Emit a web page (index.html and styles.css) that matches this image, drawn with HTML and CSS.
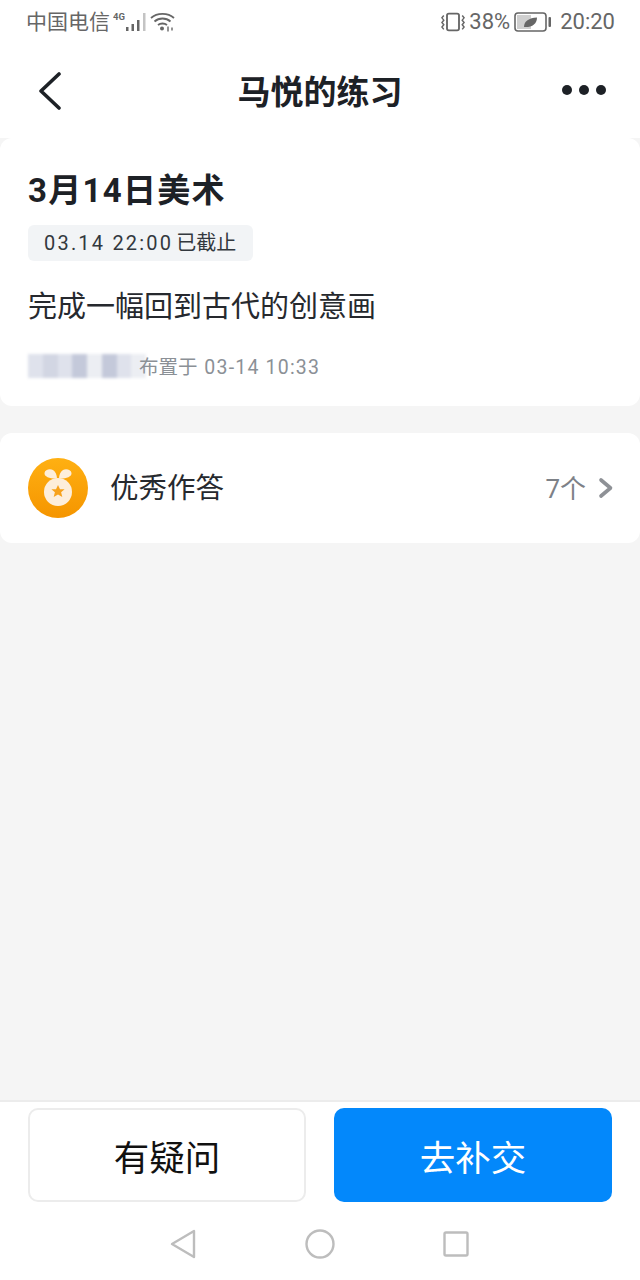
FILE: index.html

```html
<!DOCTYPE html>
<html lang="zh-CN">
 <head>
  <meta charset="UTF-8">
  <title>马悦的练习</title>
  <link rel="stylesheet" href="styles.css">
 </head>
 <body>
  <div class="page">
   <div class="status">
    <div class="status-left">
     <span class="carrier">中国电信</span>
     <svg class="signal" width="34" height="22" viewBox="0 0 34 22">
      <text x="0" y="9" class="net-type">4G</text>
      <rect x="13" y="16" width="2.500" height="4" fill="#666"/>
      <rect x="18.500" y="13" width="2.500" height="7" fill="#666"/>
      <rect x="24" y="9" width="2.500" height="11" fill="#666"/>
      <rect x="30" y="2" width="2.500" height="18" fill="#c4c4c4"/>
     </svg>
     <svg class="wifi" width="25" height="20" viewBox="0 0 25 20" fill="none" stroke="#666" stroke-width="1.800">
      <path d="M1 6C7 .5 18 .5 24 6"/>
      <path d="M4.500 9.500C9 5.500 16 5.500 20.500 9.500"/>
      <path d="M8 13C10.500 11 14.500 11 17 13"/>
      <circle cx="12" cy="16.500" r="2" fill="#666" stroke="none"/>
      <path d="M18 14.500v5M22 15.500v3" stroke-width="1.400"/>
     </svg>
    </div>
    <div class="status-right">
     <svg class="vibrate" width="24" height="20" viewBox="0 0 26 20" fill="none" stroke="#666">
      <rect x="6.500" y="1" width="13" height="18" rx="2" stroke-width="2"/>
      <path d="M3 3L1 5.500L3 8L1 10.500L3 13L1 15.500L3 18M23 3L25 5.500L23 8L25 10.500L23 13L25 15.500L23 18" stroke-width="1.600"/>
     </svg>
     <span class="pct">38%</span>
     <svg class="battery" width="38" height="22" viewBox="0 0 38 22" fill="none">
      <rect x="3" y="4" width="14" height="14" fill="#cfcfcf"/>
      <rect x="1" y="2" width="31" height="18" rx="3" stroke="#666" stroke-width="1.600"/>
      <rect x="34.500" y="6" width="2.500" height="10" rx="1" fill="#666"/>
      <path d="M10 16C10 10 15 7 23 6.500C23 13 18 16.500 10 16Z" fill="#666"/>
     </svg>
     <span class="clock">20:20</span>
    </div>
   </div>

   <div class="nav">
    <svg class="back" width="24" height="38" viewBox="0 0 24 38" fill="none" stroke="#1d2126" stroke-width="3.600" stroke-linecap="round" stroke-linejoin="round">
     <path d="M21 2L3 19L21 36"/>
    </svg>
    <div class="nav-title">马悦的练习</div>
    <div class="more"><i></i><i></i><i></i></div>
   </div>

   <div class="card detail">
    <h1 class="hw-title">3月14日美术</h1>
    <div class="deadline"><span class="deadline-time">03.14 22:00</span>已截止</div>
    <p class="hw-text">完成一幅回到古代的创意画</p>
    <div class="meta">
     <div class="mosaic"><i></i><i class="b"></i><i></i><i class="a"></i><i class="c"></i><i class="a"></i><i></i><i class="c"></i></div>
     <span class="meta-text">布置于 <span class="meta-time">03-14 10:33</span></span>
    </div>
   </div>

   <div class="card excellent">
    <svg class="medal" width="60" height="62" viewBox="0 0 60 62">
     <defs>
      <linearGradient id="gold" x1="0" y1="0" x2="0" y2="1">
       <stop offset="0" stop-color="#ffb012"/>
       <stop offset="1" stop-color="#f59500"/>
      </linearGradient>
     </defs>
     <circle cx="30" cy="31" r="30" fill="url(#gold)"/>
     <path d="M29 21.500C23 22 16 20 16.500 16C17 12.500 22 11.500 25 13C27.500 14.500 29 18 29 21.500ZM31 21.500C37 22 44 20 43.500 16C43 12.500 38 11.500 35 13C32.500 14.500 31 18 31 21.500Z" fill="#fdeedb"/>
     <circle cx="30" cy="35" r="14" fill="#fdeedb"/>
     <path d="M30 28l2 4.300h4.600l-3.500 3 1.200 4.600-4.300-2.500-4.300 2.500 1.200-4.600-3.500-3h4.600z" fill="#f7a21b"/>
    </svg>
    <span class="ex-label">优秀作答</span>
    <span class="ex-count">7个</span>
    <svg class="arrow" width="16" height="22" viewBox="0 0 16 22" fill="none" stroke="#8e9196" stroke-width="3.600" stroke-linecap="round" stroke-linejoin="round">
     <path d="M3 3L12.500 11L3 19"/>
    </svg>
   </div>

   <div class="spacer"></div>

   <div class="bottom">
    <div class="actions">
     <div class="btn btn-plain">有疑问</div>
     <div class="btn btn-blue">去补交</div>
    </div>
    <div class="sysnav">
     <svg width="26" height="30" viewBox="0 0 26 30" fill="none" stroke="#bdbdbd" stroke-width="2.400" stroke-linejoin="round">
      <path d="M24 2V28L2 15Z"/>
     </svg>
     <svg width="30" height="30" viewBox="0 0 30 30" fill="none" stroke="#bdbdbd" stroke-width="2.400">
      <circle cx="15" cy="15" r="13.500"/>
     </svg>
     <svg width="26" height="26" viewBox="0 0 26 26" fill="none" stroke="#bdbdbd" stroke-width="2.400" stroke-linejoin="round">
      <rect x="1.500" y="1.500" width="23" height="23" rx="1.500"/>
     </svg>
    </div>
   </div>
  </div>
 </body>
</html>
```

FILE: styles.css

```css
* {
	box-sizing: border-box;
}
body {
	margin: 0;
	padding: 0;
	font-family: Roboto, "Noto Sans CJK SC", sans-serif;
	background: #f5f5f5;
}
.page {
	width: 640px;
	height: 1280px;
	display: flex;
	flex-direction: column;
	overflow: hidden;
}

.status {
	height: 45px;
	background: #fff;
	padding: 0 25px 2px 26px;
	display: flex;
	justify-content: space-between;
	align-items: center;
	color: #666;
	font-size: 21px;
}
.status-left, .status-right {
	display: flex;
	align-items: center;
}
.carrier {
	padding-bottom: 3px;
}
.signal {
	margin-left: 3px;
}
.net-type {
	font-size: 9.500px;
	font-weight: bold;
	fill: #666;
}
.wifi {
	margin-left: 3px;
}
.pct {
	margin-left: 4px;
	font-size: 22px;
}
.battery {
	margin-left: 4px;
}
.clock {
	margin-left: 8px;
	font-size: 22px;
}

.nav {
	height: 93px;
	background: #fff;
	padding: 0 34px;
	display: grid;
	grid-template-columns: 1fr auto 1fr;
	align-items: center;
}
.back {
	margin: 0 0 2px 4px;
}
.nav-title {
	padding-bottom: 4px;
	font-size: 33px;
	font-weight: bold;
	color: #1d2126;
}
.more {
	justify-self: end;
	display: flex;
	gap: 7px;
	margin-bottom: 3px;
}
.more i {
	width: 10px;
	height: 10px;
	border-radius: 50%;
	background: #1d2126;
}

.card {
	background: #fff;
	border-radius: 12px;
}
.detail {
	height: 268px;
	padding: 30px 28px 0;
}
.hw-title {
	margin: 0;
	font-size: 33px;
	line-height: 46px;
	font-weight: bold;
	letter-spacing: 1.300px;
	color: #1d2126;
}
.deadline {
	display: inline-block;
	margin-top: 11px;
	height: 36px;
	line-height: 36px;
	padding: 0 17px 0 16px;
	border-radius: 6px;
	background: #f2f4f6;
	font-size: 20px;
	color: #33383e;
}
.deadline-time {
	letter-spacing: 2.200px;
	margin-right: 3px;
}
.hw-text {
	margin: 26px 0 0;
	font-size: 29px;
	line-height: 40px;
	color: #26292e;
}
.meta {
	margin-top: 24px;
	display: flex;
	align-items: center;
	font-size: 19.500px;
	color: #8b9096;
}
.meta-text {
	position: relative;
}
.meta-time {
	margin-left: 2px;
	letter-spacing: 1.200px;
}
.mosaic {
	width: 118px;
	height: 24px;
	margin-right: -7px;
	display: flex;
	overflow: hidden;
	filter: blur(1.500px);
}
.mosaic i {
	flex: 1;
	background: #dfe2ec;
}
.mosaic i.a {
	background: #c4c9da;
}
.mosaic i.b {
	background: #d2d6e3;
}
.mosaic i.c {
	background: #eceef3;
}

.excellent {
	margin-top: 27px;
	height: 110px;
	padding: 0 26px 0 28px;
	display: flex;
	align-items: center;
}
.ex-label {
	margin-left: 22px;
	padding-bottom: 6px;
	font-size: 28.500px;
	color: #26292e;
}
.ex-count {
	margin-left: auto;
	padding-bottom: 4px;
	font-size: 26px;
	color: #7d8187;
}
.arrow {
	margin-left: 12px;
}

.spacer {
	flex: 1;
}

.bottom {
	height: 180px;
	background: #fff;
	border-top: 2px solid #ececec;
}
.actions {
	padding: 6px 28px 0;
	display: flex;
	gap: 28px;
}
.btn {
	width: 278px;
	height: 94px;
	border-radius: 10px;
	display: flex;
	justify-content: center;
	align-items: center;
	font-size: 35.500px;
}
.btn-plain {
	border: 2px solid #ececec;
	color: #111;
}
.btn-blue {
	background: #0388fb;
	color: #fff;
}
.sysnav {
	margin-top: 27px;
	padding: 0 171px 0 170px;
	display: flex;
	justify-content: space-between;
	align-items: center;
}
```
